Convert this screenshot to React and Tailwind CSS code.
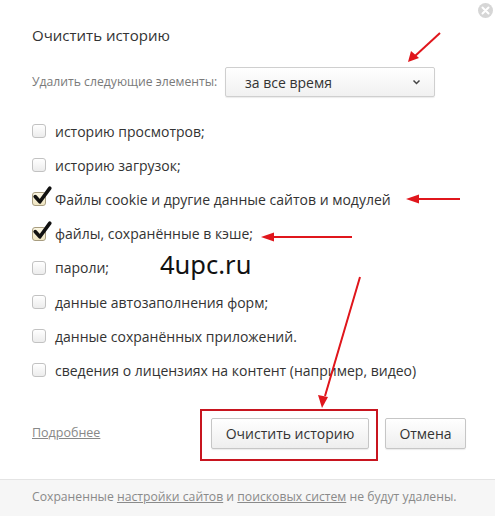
import React from "react";

function Box({ checked }) {
  if (checked) {
    return (
      <span className="relative w-[14px] h-[14px] shrink-0 rounded-[3px] border border-[#a89d80] bg-gradient-to-b from-[#fbf6e2] to-[#efe5c2]">
        <svg className="absolute left-[-1px] top-[-8px]" width="21" height="21" viewBox="0 0 20 20">
          <path d="M3 11 L7.5 16 L17 3" fill="none" stroke="#111" strokeWidth="3.4" strokeLinecap="round" strokeLinejoin="round" />
        </svg>
      </span>
    );
  }
  return (
    <span className="w-[14px] h-[14px] shrink-0 rounded-[3px] border border-[#c2c2c2] bg-gradient-to-b from-white to-[#ececec]" />
  );
}

const items = [
  ["историю просмотров;", false],
  ["историю загрузок;", false],
  ["Файлы cookie и другие данные сайтов и модулей", true],
  ["файлы, сохранённые в кэше;", true],
  ["пароли;", false],
  ["данные автозаполнения форм;", false],
  ["данные сохранённых приложений.", false],
  ["сведения о лицензиях на контент (например, видео)", false],
];

export default function App() {
  return (
    <div className="relative w-[495px] h-[516px] bg-white overflow-hidden font-['Open_Sans',sans-serif] text-[#333]">
      <div className="absolute top-[3px] right-[2px] w-[15px] h-[15px] rounded-full bg-[#d6d6d6] flex items-center justify-center">
        <svg width="9" height="9" viewBox="0 0 9 9">
          <path d="M1.5 1.5 L7.5 7.5 M7.5 1.5 L1.5 7.5" stroke="#fff" strokeWidth="2" strokeLinecap="round" />
        </svg>
      </div>

      <div className="pl-8 pr-[60px] pt-[24px]">
        <h1 className="text-[15px] leading-[22px] text-[#333]">Очистить историю</h1>
        <div className="mt-[21px] flex items-center h-[30px]">
          <span className="w-[193px] text-[12.2px] text-[#7a7a7a] whitespace-nowrap">Удалить следующие элементы:</span>
          <div className="w-[210px] h-[30px] flex items-center justify-between pl-[19px] pr-[13px] rounded-[2px] border border-[#cfcfcf] bg-gradient-to-b from-white to-[#f1f1f1] shadow-[0_1px_1px_rgba(0,0,0,0.08)]">
            <span className="text-[14px] text-[#333]">за все время</span>
            <svg width="9" height="6" viewBox="0 0 9 6">
              <path d="M1.5 1.5 L4.5 4.5 L7.5 1.5" fill="none" stroke="#444" strokeWidth="1.5" />
            </svg>
          </div>
        </div>

        <div className="mt-[17px] flex flex-col">
          {items.map(([t, c]) => (
            <div key={t} className="h-[34.2px] flex items-center gap-[9px]">
              <Box checked={c} />
              <span className="text-[14px] text-[#333] whitespace-nowrap">{t}</span>
            </div>
          ))}
        </div>
      </div>

      <div className="mt-[30px] pl-8 pr-[29px] flex items-center h-[31px]">
        <a className="text-[12.5px] text-[#888] underline">Подробнее</a>
        <div className="ml-auto flex gap-[16px]">
          <button className="w-[158px] h-[31px] rounded-[2px] border border-[#c6c6c6] bg-gradient-to-b from-white to-[#eeeeee] text-[14px] text-[#333] shadow-[0_1px_1px_rgba(0,0,0,0.08)]">
            Очистить историю
          </button>
          <button className="w-[81px] h-[31px] rounded-[2px] border border-[#c6c6c6] bg-gradient-to-b from-white to-[#eeeeee] text-[14px] text-[#333] shadow-[0_1px_1px_rgba(0,0,0,0.08)]">
            Отмена
          </button>
        </div>
      </div>

      <div className="mt-[30px] h-[37px] border-t border-[#e4e4e4] bg-[#f6f6f6] pl-8 flex items-center">
        <span className="text-[12.2px] text-[#8a8a8a] whitespace-nowrap">
          Сохраненные <span className="underline">настройки сайтов</span> и{" "}
          <span className="underline">поисковых систем</span> не будут удалены.
        </span>
      </div>

      <div className="absolute left-[160px] top-[248px] text-[25.5px] leading-[32px] text-[#111] font-['Noto_Sans',sans-serif]">
        4upc.ru
      </div>

      <div className="absolute left-[200px] top-[409px] w-[178px] h-[52px] border-2 border-[#c8151f]" />

      <svg className="absolute inset-0 pointer-events-none" width="495" height="516">
        <g stroke="#e0161c" strokeWidth="2" fill="#e0161c">
          <line x1="440" y1="33" x2="415" y2="56" />
          <polygon points="408,62 411,51 419,58" stroke="none" />
          <line x1="460" y1="199" x2="418" y2="199" />
          <polygon points="406,199 419,194.5 419,203.5" stroke="none" />
          <line x1="352" y1="237" x2="273" y2="237" />
          <polygon points="261,237 274,232.5 274,241.5" stroke="none" />
          <line x1="360" y1="277" x2="325" y2="396" />
          <polygon points="322,408 318,395 328,397" stroke="none" />
        </g>
      </svg>
    </div>
  );
}
